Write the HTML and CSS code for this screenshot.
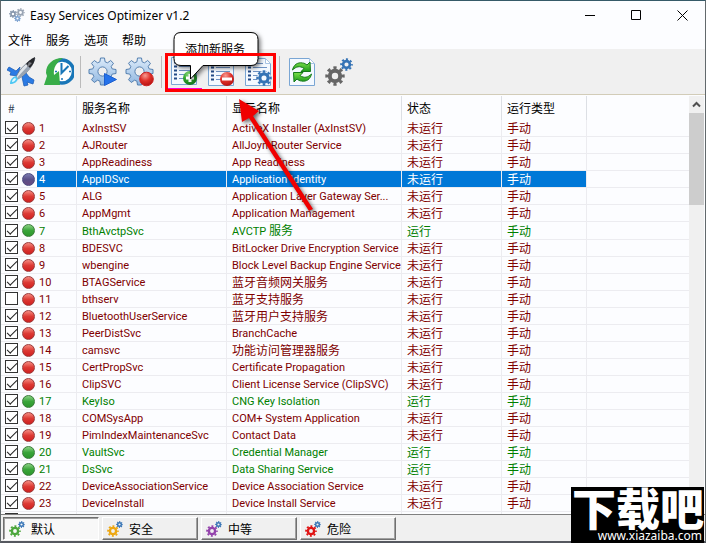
FILE: index.html
```html
<!DOCTYPE html>
<html lang="zh-CN">

<head>
	<meta charset="utf-8">
	<meta name="viewport" content="width=device-width">
	<title>Easy Services Optimizer v1.2</title>
	<link rel="stylesheet" href="styles.css">
</head>

<body>
	<!-- shared shapes -->
	<svg class="defs" aria-hidden="true">
		<defs>
			<linearGradient id="steel" x1="0" y1="0" x2="0" y2="1">
				<stop offset="0" stop-color="#dcebfa" />
				<stop offset="1" stop-color="#8fb6e0" />
			</linearGradient>
			<radialGradient id="redBall" cx=".4" cy=".25" r=".8">
				<stop offset="0" stop-color="#f79a90" />
				<stop offset=".5" stop-color="#df2f28" />
				<stop offset="1" stop-color="#b01010" />
			</radialGradient>
			<radialGradient id="greenBall" cx=".4" cy=".25" r=".8">
				<stop offset="0" stop-color="#8fdc80" />
				<stop offset=".5" stop-color="#2ea52c" />
				<stop offset="1" stop-color="#12701a" />
			</radialGradient>
			<linearGradient id="leaf" x1="0" y1="0" x2="0" y2="1">
				<stop offset="0" stop-color="#7be04a" />
				<stop offset="1" stop-color="#1b9a1b" />
			</linearGradient>
		</defs>
		<!-- small flat cog, 20x20, 8 teeth -->
		<symbol id="cog" viewBox="0 0 20 20">
			<circle cx="10" cy="10" r="5.2" fill="none" stroke="currentColor" stroke-width="4" />
			<circle cx="10" cy="10" r="8.2" fill="none" stroke="currentColor" stroke-width="3" pathLength="16" stroke-dasharray="1 1" stroke-dashoffset=".5" />
		</symbol>
		<symbol id="bigcog" viewBox="0 0 30 30">
			<path d="M12.5 1h4l.6 3.800 2.400 1 3.200-2.300 2.800 2.800-2.300 3.200 1 2.400 3.800.6v4l-3.800.6-1 2.400 2.300 3.200-2.800 2.800-3.200-2.300-2.400 1-.6 3.800h-4l-.6-3.800-2.400-1-3.200 2.300-2.800-2.800 2.300-3.200-1-2.400-3.800-.6v-4l3.800-.6 1-2.400-2.300-3.200 2.800-2.800 3.200 2.300 2.400-1z" fill="url(#steel)" stroke="#5580b0" />
			<circle cx="14.500" cy="14.500" r="4.600" fill="#efefef" stroke="#5580b0" />
		</symbol>
		<symbol id="page" viewBox="0 0 30 30">
			<path d="M2.500 1.500h20l5 5v22h-25z" fill="#f4f9ff" stroke="#7aa6d4" />
			<path d="M22.500 1.500v5h5z" fill="#fff" stroke="#a8c4e4" />
			<path d="M5 6.500h3M5 10.500h3M5 14.500h3M5 18.500h3M5 22.500h3" stroke="#234a86" stroke-width="2" />
			<path d="M10 6.500h10M10 10.500h14M10 14.500h14M10 18.500h14M10 22.500h14" stroke="#6f93c4" />
		</symbol>
		<symbol id="gears" viewBox="0 0 16 16">
			<use href="#cog" x="0" y="4" width="12" height="12" />
			<use href="#cog" x="9" y="0" width="7" height="7" color="#3573b5" />
		</symbol>
	</svg>

	<div class="window">
		<header class="titlebar">
			<svg class="app-icon" viewBox="0 0 16 16">
				<use href="#cog" x="7" y="0" width="9" height="9" color="#9aa5b4" />
				<use href="#cog" x="0" y="2" width="8" height="8" color="#8495ac" />
				<use href="#cog" x="5" y="7" width="7" height="7" color="#7aa0cf" />
			</svg>
			<h1>Easy Services Optimizer v1.2</h1>
			<button type="button" class="caption" aria-label="最小化"><svg viewBox="0 0 11 11"><path d="M0 5.500h10" /></svg></button>
			<button type="button" class="caption" aria-label="最大化"><svg viewBox="0 0 11 11"><path d="M.5.500h9v9h-9z" /></svg></button>
			<button type="button" class="caption" aria-label="关闭"><svg viewBox="0 0 11 11"><path d="M.5.500l10 10M10.500.500l-10 10" /></svg></button>
		</header>

		<nav class="menu">
			<a href="#">文件</a>
			<a href="#">服务</a>
			<a href="#">选项</a>
			<a href="#">帮助</a>
		</nav>

		<div class="toolbar">
			<button type="button" aria-label="优化">
				<svg viewBox="0 0 30 30">
					<path d="M13 10L9 14 2 10 0 13l4 2-1 3 8 1zM19 16l-4 4 2 9 4-1-1-3 6 2 1-4-5-3z" fill="#2b7be4" stroke="#1f60b8" stroke-width=".8" />
					<path d="M28 1C21 4 13 11 9 20l2 2c7-4 15-12 17-21z" fill="#dfe4ea" stroke="#6b7684" stroke-width=".8" />
					<path d="M28 1C22 8 15 15 10 21l1 1c7-4 15-12 17-21z" fill="#98a4b3" />
					<path d="M28 0c-4 2-7 4-9 7l4 4c3-3 5-7 5-11z" fill="#26272b" />
					<path d="M22 5l3 1-4 4-1-1z" fill="#77797f" />
					<path d="M9 19c-4 1-6 4-6 8 4 0 7-2 8-5z" fill="#4fc8f4" />
					<path d="M8 21c-2 1-3 2-3 4 2 0 3-1 4-3z" fill="#e2f9ff" />
				</svg>
			</button>
			<button type="button" aria-label="还原">
				<svg viewBox="0 0 30 30">
					<circle cx="18" cy="14.500" r="11.500" fill="#fff" stroke="#1876b8" stroke-width="3.500" />
					<path d="M17.500 6v10l7-7" fill="none" stroke="#1876b8" stroke-width="2" />
					<path d="M25 14.500h2M18 21v2M11 14.500h2" stroke="#1876b8" stroke-width="1.500" />
					<path d="M19 1C9 1 2 7 2 16l1 3-3 9h16l-1-14-5 4c-1-7 2-12 9-17z" fill="#39ad48" />
				</svg>
			</button>
			<span class="sep"></span>
			<button type="button" aria-label="启动服务">
				<svg viewBox="0 0 30 30"><use href="#bigcog" /><path d="M16.500 16.500l12 6-12 6z" fill="#2472ea" stroke="#1c5fd0" /></svg>
			</button>
			<button type="button" aria-label="停止服务">
				<svg viewBox="0 0 30 30"><use href="#bigcog" /><circle cx="21.500" cy="22" r="6.800" fill="url(#redBall)" stroke="#c22" /></svg>
			</button>
			<span class="sep"></span>
			<button type="button" class="hot" aria-label="添加服务">
				<svg viewBox="0 0 30 30"><use href="#page" /><circle cx="21" cy="22" r="7" fill="url(#greenBall)" /><path d="M21 18v8M17 22h8" stroke="#fff" stroke-width="3" /></svg>
			</button>
			<button type="button" aria-label="删除服务">
				<svg viewBox="0 0 30 30"><use href="#page" /><circle cx="21" cy="22" r="7" fill="url(#redBall)" /><path d="M16 22h10" stroke="#fff" stroke-width="3" /></svg>
			</button>
			<button type="button" aria-label="编辑服务">
				<svg viewBox="0 0 30 30"><use href="#page" /><circle cx="21" cy="21" r="7" fill="#f4f9ff" /><use href="#cog" x="13" y="13" width="16" height="16" color="#3573b5" /></svg>
			</button>
			<span class="sep"></span>
			<button type="button" aria-label="刷新">
				<svg viewBox="0 0 30 30">
					<path d="M2.500 1.500h20l5 5v22h-25z" fill="#f4f9ff" stroke="#7aa6d4" />
					<path d="M22.500 1.500v5h5z" fill="#fff" stroke="#a8c4e4" />
					<path d="M5.500 13c1-5 5-8 10-7 2 0 3 1 4.500 2l3-3 .5 9.500H14l3-3c-4-3-8-2-11.500 1.500z" fill="url(#leaf)" stroke="#167a1c" />
					<path d="M24.500 17c-1 5-5 8-10 7-2 0-3-1-4.500-2l-3 3-.5-9.500H16l-3 3c4 3 8 2 11.500-1.500z" fill="url(#leaf)" stroke="#167a1c" />
				</svg>
			</button>
			<button type="button" aria-label="设置">
				<svg viewBox="0 0 30 30"><use href="#cog" x="1" y="9" width="20" height="20" color="#666" /><use href="#cog" x="16" y="1" width="13" height="13" color="#3573b5" /></svg>
			</button>
		</div>

		<main class="list">
			<div class="rows">
				<table>
					<colgroup>
						<col class="c-num">
						<col class="c-name">
						<col class="c-title">
						<col class="c-state">
						<col class="c-type">
						<col>
					</colgroup>
					<thead>
						<tr><th class="num">#</th><th>服务名称</th><th>显示名称</th><th>状态</th><th>运行类型</th><th></th></tr>
					</thead>
					<tbody>
						<tr><td><label><input type="checkbox" checked><i></i><span>1</span></label></td><td>AxInstSV</td><td>ActiveX Installer (AxInstSV)</td><td class="zh">未运行</td><td class="zh">手动</td><td></td></tr>
						<tr><td><label><input type="checkbox" checked><i></i><span>2</span></label></td><td>AJRouter</td><td>AllJoyn Router Service</td><td class="zh">未运行</td><td class="zh">手动</td><td></td></tr>
						<tr><td><label><input type="checkbox" checked><i></i><span>3</span></label></td><td>AppReadiness</td><td>App Readiness</td><td class="zh">未运行</td><td class="zh">手动</td><td></td></tr>
						<tr class="selected"><td><label><input type="checkbox" checked><i></i><span>4</span></label></td><td>AppIDSvc</td><td>Application Identity</td><td class="zh">未运行</td><td class="zh">手动</td><td></td></tr>
						<tr><td><label><input type="checkbox" checked><i></i><span>5</span></label></td><td>ALG</td><td>Application Layer Gateway Ser...</td><td class="zh">未运行</td><td class="zh">手动</td><td></td></tr>
						<tr><td><label><input type="checkbox" checked><i></i><span>6</span></label></td><td>AppMgmt</td><td>Application Management</td><td class="zh">未运行</td><td class="zh">手动</td><td></td></tr>
						<tr class="on"><td><label><input type="checkbox" checked><i></i><span>7</span></label></td><td>BthAvctpSvc</td><td>AVCTP <b>服务</b></td><td class="zh">运行</td><td class="zh">手动</td><td></td></tr>
						<tr><td><label><input type="checkbox" checked><i></i><span>8</span></label></td><td>BDESVC</td><td>BitLocker Drive Encryption Service</td><td class="zh">未运行</td><td class="zh">手动</td><td></td></tr>
						<tr><td><label><input type="checkbox" checked><i></i><span>9</span></label></td><td>wbengine</td><td>Block Level Backup Engine Service</td><td class="zh">未运行</td><td class="zh">手动</td><td></td></tr>
						<tr><td><label><input type="checkbox" checked><i></i><span>10</span></label></td><td>BTAGService</td><td class="zh">蓝牙音频网关服务</td><td class="zh">未运行</td><td class="zh">手动</td><td></td></tr>
						<tr><td><label><input type="checkbox"><i></i><span>11</span></label></td><td>bthserv</td><td class="zh">蓝牙支持服务</td><td class="zh">未运行</td><td class="zh">手动</td><td></td></tr>
						<tr><td><label><input type="checkbox" checked><i></i><span>12</span></label></td><td>BluetoothUserService</td><td class="zh">蓝牙用户支持服务</td><td class="zh">未运行</td><td class="zh">手动</td><td></td></tr>
						<tr><td><label><input type="checkbox" checked><i></i><span>13</span></label></td><td>PeerDistSvc</td><td>BranchCache</td><td class="zh">未运行</td><td class="zh">手动</td><td></td></tr>
						<tr><td><label><input type="checkbox" checked><i></i><span>14</span></label></td><td>camsvc</td><td class="zh">功能访问管理器服务</td><td class="zh">未运行</td><td class="zh">手动</td><td></td></tr>
						<tr><td><label><input type="checkbox" checked><i></i><span>15</span></label></td><td>CertPropSvc</td><td>Certificate Propagation</td><td class="zh">未运行</td><td class="zh">手动</td><td></td></tr>
						<tr><td><label><input type="checkbox" checked><i></i><span>16</span></label></td><td>ClipSVC</td><td>Client License Service (ClipSVC)</td><td class="zh">未运行</td><td class="zh">手动</td><td></td></tr>
						<tr class="on"><td><label><input type="checkbox" checked><i></i><span>17</span></label></td><td>KeyIso</td><td>CNG Key Isolation</td><td class="zh">运行</td><td class="zh">手动</td><td></td></tr>
						<tr><td><label><input type="checkbox" checked><i></i><span>18</span></label></td><td>COMSysApp</td><td>COM+ System Application</td><td class="zh">未运行</td><td class="zh">手动</td><td></td></tr>
						<tr><td><label><input type="checkbox" checked><i></i><span>19</span></label></td><td>PimIndexMaintenanceSvc</td><td>Contact Data</td><td class="zh">未运行</td><td class="zh">手动</td><td></td></tr>
						<tr class="on"><td><label><input type="checkbox" checked><i></i><span>20</span></label></td><td>VaultSvc</td><td>Credential Manager</td><td class="zh">运行</td><td class="zh">手动</td><td></td></tr>
						<tr class="on"><td><label><input type="checkbox" checked><i></i><span>21</span></label></td><td>DsSvc</td><td>Data Sharing Service</td><td class="zh">运行</td><td class="zh">手动</td><td></td></tr>
						<tr><td><label><input type="checkbox" checked><i></i><span>22</span></label></td><td>DeviceAssociationService</td><td>Device Association Service</td><td class="zh">未运行</td><td class="zh">手动</td><td></td></tr>
						<tr><td><label><input type="checkbox" checked><i></i><span>23</span></label></td><td>DeviceInstall</td><td>Device Install Service</td><td class="zh">未运行</td><td class="zh">手动</td><td></td></tr>
						<tr><td><label><input type="checkbox" aria-label="24" checked><i></i></label></td><td></td><td></td><td></td><td></td><td></td></tr>
					</tbody>
				</table>
			</div>
			<div class="scrollbar">
				<svg viewBox="0 0 15 17"><path d="M4 10.500l3.500-3.500 3.500 3.500" /></svg>
				<div class="thumb"></div>
			</div>
		</main>

		<footer class="profiles">
			<button type="button" class="green" aria-pressed="true"><svg viewBox="0 0 16 16"><use href="#gears" /></svg>默认</button>
			<button type="button" class="amber"><svg viewBox="0 0 16 16"><use href="#gears" /></svg>安全</button>
			<button type="button" class="violet"><svg viewBox="0 0 16 16"><use href="#gears" /></svg>中等</button>
			<button type="button" class="red"><svg viewBox="0 0 16 16"><use href="#gears" /></svg>危险</button>
		</footer>
	</div>

	<!-- annotations over the window -->
	<div class="callout">
		<svg viewBox="0 0 92 56"><path d="M8 1.500h70q7 0 7 7v19q0 7-7 7H30L17.500 48V34.500H8q-7 0-7-7v-19q0-7 7-7z" /></svg>
		<span>添加新服务</span>
	</div>
	<div class="marker"></div>
	<svg class="arrow" viewBox="0 0 90 125"><path d="M4 3l20 12-6 5 60 93-4 2-60-93-7 4z" /></svg>
	<div class="watermark">
		<strong>下载吧</strong>
		<span>www.xiazaiba.com</span>
	</div>
</body>

</html>
```

FILE: styles.css
```css
:root {
	--line: #ececf0;
	--face: #f0f0f0;
	--stopped: #800000;
	--running: #008000;
	--pick: #0078d7;
	--latin: Roboto, "Noto Sans CJK SC", sans-serif;
	--zh: "Noto Sans CJK SC", sans-serif;
}

* {
	box-sizing: border-box;
}

body {
	margin: 0;
	font: 12px/16px var(--zh);
	color: #000;
	position: relative;
	overflow: hidden;
}

button {
	font: inherit;
	color: inherit;
	padding: 0;
	border: 0;
	background: none;
}

.defs {
	position: absolute;
	width: 0;
	height: 0;
}

.window {
	display: flex;
	flex-direction: column;
	height: 100vh;
	background: #fcfdff;
	border: 1px solid #62696c;
	border-top-color: #355a68;
	border-bottom: 2px solid #55585f;
}

/* title bar */
.titlebar {
	display: flex;
	align-items: center;
	height: 29px;
	padding-left: 8px;
	flex: none;
}

.app-icon {
	width: 16px;
	height: 16px;
}

h1 {
	flex: 1;
	margin: 0 0 0 5px;
	font: 12px/16px "Noto Sans", sans-serif;
}

.caption {
	width: 46px;
	height: 29px;
}

.caption svg {
	display: block;
	width: 11px;
	height: 11px;
	margin: auto;
	fill: none;
	stroke: #000;
}

.menu {
	display: flex;
	gap: 14px;
	height: 19px;
	padding: 2px 7px 0;
	flex: none;
}

.menu a {
	color: #000;
	text-decoration: none;
}

/* toolbar */
.toolbar {
	display: flex;
	align-items: center;
	height: 46px;
	padding-left: 2px;
	background: var(--face);
	border-bottom: 1px solid #d2ccb8;
	flex: none;
}

.toolbar button {
	width: 37px;
	height: 34px;
}

.toolbar svg {
	display: block;
	width: 30px;
	height: 30px;
	margin: auto;
}

.toolbar .hot {
	border-bottom: 1px solid #f0c;
}

.sep {
	width: 7px;
	height: 32px;
	background: linear-gradient(#bbb, #bbb) 3px 0 / 1px 100% no-repeat;
}

/* service list */
.list {
	display: flex;
	flex: 1;
	min-height: 0;
	padding-top: 1px;
}

.rows {
	flex: 1;
	overflow: hidden;
}

table {
	width: 100%;
	table-layout: fixed;
	border-collapse: separate;
	border-spacing: 0;
	color: var(--stopped);
}

.c-num {
	width: 76px;
}

.c-name {
	width: 150px;
}

.c-title {
	width: 175px;
}

.c-state {
	width: 100px;
}

.c-type {
	width: 85px;
}

th {
	height: 24px;
	padding: 0 5px;
	font-weight: 400;
	text-align: left;
	color: #000;
	border-right: 1px solid #dcdfe4;
}

th.num {
	padding-left: 7px;
	color: #345;
}

td {
	height: 17px;
	padding: 2px 5px 0;
	font: 11px/14px var(--latin);
	white-space: nowrap;
	overflow: hidden;
	border-right: 1px solid var(--line);
	border-bottom: 1px solid var(--line);
}

th:last-child,
td:last-child {
	border-right: 0;
}

td:first-child {
	padding: 0 0 0 4px;
}

td.zh {
	padding: 0 5px;
	font: 12px/16px var(--zh);
}

td b {
	font: 12px/12px var(--zh);
}

label {
	display: flex;
	align-items: center;
	height: 16px;
}

input {
	appearance: none;
	width: 13px;
	height: 13px;
	margin: 0 4px 1px 0;
	background: #fff;
	border: 1px solid #333;
	display: grid;
	place-items: center;
	flex: none;
}

input:checked::before {
	content: "";
	width: 9px;
	height: 4px;
	border: solid #222;
	border-width: 0 0 1px 1px;
	transform: translateY(-1px) rotate(-45deg);
}

label i {
	width: 13px;
	height: 13px;
	margin-right: 2px;
	border: 1px solid #9a3a3a;
	border-radius: 50%;
	background: linear-gradient(#f58a80, #dd3a34 50%, #cf1f1f);
	flex: none;
}

label span {
	flex: 1;
	padding: 2px 0 0 2px;
}

.on {
	color: var(--running);
}

.on i {
	border-color: #3a7a3a;
	background: linear-gradient(#8ad284, #3aa53a 50%, #2c962c);
}

.selected {
	color: #fff;
}

.selected i {
	border-color: #4a4a80;
	background: linear-gradient(#7a7ab0, #5a5088 50%, #6a4a80);
}

.selected label span,
.selected td:not(:first-child):not(:last-child) {
	background: var(--pick);
	background-clip: padding-box;
}

.scrollbar {
	width: 15px;
	margin-right: 1px;
	background: var(--face);
}

.scrollbar svg {
	display: block;
	width: 15px;
	height: 17px;
	fill: none;
	stroke: #505050;
	stroke-width: 2;
}

.thumb {
	height: 92px;
	background: #cdcdcd;
}

/* profile buttons */
.profiles {
	display: flex;
	gap: 3px;
	height: 27px;
	padding: 2px;
	background: var(--face);
	border-top: 1px solid #808080;
	flex: none;
}

.profiles button {
	display: flex;
	align-items: center;
	gap: 6px;
	width: 96px;
	height: 23px;
	padding-left: 4px;
	border: 1px solid;
	border-color: #fff #707070 #707070 #fff;
	box-shadow: inset -1px -1px #a0a0a0;
}

.profiles svg {
	width: 16px;
	height: 16px;
}

.profiles [aria-pressed="true"] {
	padding-left: 5px;
	background: #f8f8f8;
	border-color: #707070 #fff #fff #707070;
	box-shadow: inset 1px 1px #a0a0a0;
}

.green svg {
	color: #4ca63c;
}

.amber svg {
	color: #eda712;
}

.violet svg {
	color: #9443ac;
}

.red svg {
	color: #e01414;
}

/* annotations */
.callout {
	position: absolute;
	left: 173px;
	top: 31px;
	width: 92px;
	height: 56px;
}

.callout svg {
	position: absolute;
	inset: 0;
	fill: #fff;
	stroke: #000;
	filter: drop-shadow(2px 2px 2px rgba(0, 0, 0, .5));
}

.callout span {
	position: absolute;
	left: 12px;
	top: 10px;
	white-space: nowrap;
}

.marker {
	position: absolute;
	left: 165px;
	top: 53px;
	width: 111px;
	height: 39px;
	border: 3px solid #f00;
}

.arrow {
	position: absolute;
	left: 235px;
	top: 96px;
	width: 90px;
	height: 125px;
	fill: #f00000;
	filter: drop-shadow(2px 2px 2px rgba(0, 0, 0, .6));
}

.watermark {
	position: absolute;
	right: 2px;
	bottom: 0;
	display: flex;
	flex-direction: column;
	align-items: flex-end;
	width: 133px;
	height: 56px;
	background: #000;
	color: #fff;
}

.watermark strong {
	font: 900 44px/40px var(--zh);
}

.watermark span {
	padding-right: 2px;
	font: 12px/18px "Noto Sans", sans-serif;
}
```
